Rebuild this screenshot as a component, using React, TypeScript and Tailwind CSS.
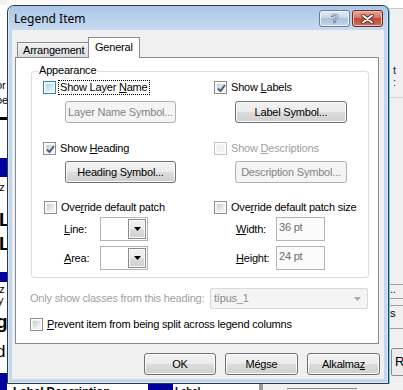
import type { ReactNode } from "react";

const ui = "font-['Liberation_Sans',Arial,sans-serif] text-[11px] leading-[13px] tracking-[-0.2px]";

const btnFace =
	"bg-[linear-gradient(#f2f2f2,#ebebeb_50%,#dddddd_50%,#cfcfcf)] shadow-[inset_0_0_0_1px_#fbfbfb]";

type BoxState = "normal" | "hot" | "disabled";

function CheckBox({ checked, state = "normal" }: { checked?: boolean; state?: BoxState }) {
	const outer =
		state === "hot"
			? "border-[#3c7fb1]"
			: state === "disabled"
				? "border-[#c2c2c2]"
				: "border-[#8e8f8f]";
	const inner =
		state === "hot"
			? "border-[#def1fc] bg-[linear-gradient(135deg,#a9d8f5,#e8f6fe)]"
			: state === "disabled"
				? "border-[#f7f7f7] bg-[#f1f1f1]"
				: "border-[#f2f2f2] bg-[linear-gradient(135deg,#cdcdcd,#f7f7f7)]";
	return (
		<span className={`relative flex h-[13px] w-[13px] shrink-0 border bg-white p-px ${outer}`}>
			<span className={`flex-1 border ${inner}`} />
			{checked && (
				<svg className="absolute left-[1px] top-[1px]" width="11" height="11" viewBox="0 0 11 11">
					<path d="M2 5.5 L4.5 8 L9 2" fill="none" stroke="#3f5b8e" strokeWidth="2" />
				</svg>
			)}
		</span>
	);
}

function CheckRow({
	children,
	checked,
	state,
	focus,
	className = "",
}: {
	children: ReactNode;
	checked?: boolean;
	state?: BoxState;
	focus?: boolean;
	className?: string;
}) {
	return (
		<div className={`flex h-[15px] items-center ${className}`}>
			<CheckBox checked={checked} state={state} />
			<span
				className={`ml-[2px] border px-[1px] leading-[13px] ${
					focus ? "border-dotted border-black" : "border-transparent"
				} ${state === "disabled" ? "text-[#a0a0a0]" : "text-black"}`}
			>
				{children}
			</span>
		</div>
	);
}

function Btn({
	children,
	disabled,
	className = "",
}: {
	children: ReactNode;
	disabled?: boolean;
	className?: string;
}) {
	return (
		<div
			className={`flex h-[22px] items-center justify-center rounded-[3px] border ${
				disabled ? "border-[#adb2b5] bg-[#f4f4f4] text-[#838383]" : `border-[#707070] text-black ${btnFace}`
			} ${className}`}
		>
			{children}
		</div>
	);
}

function Combo() {
	return (
		<div className="flex h-[24px] w-[48px] border border-[#b5b5b5] bg-white p-px">
			<div className="flex-1" />
			<div className={`flex w-[18px] items-center justify-center border border-[#8a8a8a] ${btnFace}`}>
				<svg width="7" height="4" viewBox="0 0 7 4">
					<path d="M0 0H7L3.5 4Z" fill="#000" />
				</svg>
			</div>
		</div>
	);
}

function PtBox({ value }: { value: string }) {
	return (
		<div className="h-[24px] w-[49px] border border-[#b4b4b4] bg-[#fbfbfb] pl-[2px] pt-[3px] text-[#6d6d6d]">
			{value}
		</div>
	);
}

function Ul({ children }: { children: ReactNode }) {
	return <u className="underline-offset-[1px]">{children}</u>;
}

function Backdrop() {
	return (
		<>
			{/* strip above the window */}
			<div className="absolute left-0 top-0 h-[6px] w-[403px] bg-[#fbfbfb]" />
			{/* left edge of the app behind */}
			<div className="absolute left-0 top-0 h-[390px] w-[7px] overflow-hidden bg-white font-['Liberation_Sans',Arial,sans-serif] text-black">
				<div className="absolute left-0 top-0 h-[5px] w-[7px] bg-[#f0f0f0]" />
				<div className="absolute left-[-4px] top-[80px] text-[11px] leading-[11px]">or</div>
				<div className="absolute left-[-4px] top-[95px] text-[11px] leading-[11px]">oe</div>
				<div className="absolute left-0 top-[117px] h-[3px] w-[7px] bg-black" />
				<div className="absolute left-0 top-[158px] h-[19px] w-[7px] bg-[#00009c]" />
				<div className="absolute left-[-3px] top-[182px] text-[11px] leading-[11px]">iz</div>
				<div className="absolute left-[-1px] top-[210px] text-[19px] font-bold leading-[20px]">L</div>
				<div className="absolute left-[-1px] top-[234px] text-[19px] font-bold leading-[20px]">L</div>
				<div className="absolute left-0 top-[272px] h-[10px] w-[7px] bg-[#00009c]" />
				<div className="absolute left-[-3px] top-[284px] text-[11px] leading-[10px]">iz</div>
				<div className="absolute left-[-2px] top-[295px] text-[11px] leading-[10px]">y</div>
				<div className="absolute left-[-4px] top-[312px] text-[19px] font-bold leading-[20px]">g</div>
				<div className="absolute left-[-4px] top-[342px] text-[17px] leading-[20px]">d</div>
				<div className="absolute left-0 top-[373px] h-[17px] w-[7px] bg-[#00009c]" />
			</div>
			{/* right edge of the app behind */}
			<div className="absolute left-[389px] top-0 h-[390px] w-[14px] overflow-hidden bg-[#f0f0f0] font-['Liberation_Sans',Arial,sans-serif] text-[11px]">
				<div className="absolute left-0 top-0 h-[8px] w-[14px] bg-white" />
				<div className="absolute left-0 top-[8px] h-px w-[14px] bg-[#c8c8c8]" />
				<div className="absolute left-[4px] top-[64px] text-[#1a2a6a]">t</div>
				<div className="absolute left-[4px] top-[76px] text-[#1a2a6a]">:</div>
				<div className="absolute left-0 top-[97px] h-px w-[14px] bg-[#d0d0d0]" />
				<div className="absolute left-0 top-[284px] h-px w-[14px] bg-[#a0a0a0]" />
				<div className="absolute left-[1px] top-[283px] text-black">..</div>
				<div className="absolute left-0 top-[298px] h-px w-[14px] bg-[#a0a0a0]" />
				<div className="absolute left-0 top-[305px] h-px w-[14px] bg-[#a0a0a0]" />
				<div className="absolute left-[1px] top-[307px] text-black">s</div>
				<div className="absolute left-0 top-[328px] h-px w-[14px] bg-[#a0a0a0]" />
				<div className="absolute left-[2px] top-[348px] h-[28px] w-[20px] rounded-[2px] border border-[#8a8a8a] bg-[#ececec] pl-[3px] pt-[6px] text-[13px] text-black">
					R
				</div>
				<div className="absolute left-0 top-[383px] h-[7px] w-[14px] bg-[#f7f7f7]" />
			</div>
			{/* bottom edge */}
			<div className="absolute left-[7px] top-[384px] flex h-[6px] w-[396px] overflow-hidden bg-[#f0f0f0] font-['Liberation_Sans',Arial,sans-serif] text-[12px] leading-[14px] text-black">
				<div className="w-[141px] bg-white pl-[6px] pt-[1px] font-bold">Label Description</div>
				<div className="w-[25px] bg-[#00009c]" />
				<div className="w-[86px] bg-white pl-[2px] pt-[1px] text-[10px] font-bold">Label</div>
				<div className="w-[4px] bg-[#9a9a9a]" />
				<div className="ml-[24px] mt-[4px] h-[3px] w-[70px] border-t border-[#8a8a8a]" />
			</div>
		</>
	);
}

export default function App() {
	return (
		<div className={`relative h-[390px] w-[403px] overflow-hidden bg-[#f0f0f0] ${ui}`}>
			<Backdrop />

			<div className="absolute left-[7px] top-[5px] flex h-[379px] w-[382px] flex-col rounded-t-[7px] border border-[#2d3a48] bg-[#c3d8ef] px-[4px] pb-[4px] shadow-[inset_0_0_0_1px_#dbe8f6,1px_0_0_#5fd0f0]">
				{/* title bar */}
				<div className="flex h-[24px] shrink-0 items-start -mx-[3px] rounded-t-[6px] bg-[linear-gradient(#aac6e7,#c6dbf1)] px-[3px]">
					<span className="ml-[2px] mt-[5px] font-['Noto_Sans',sans-serif] text-[12px] leading-[16px] tracking-normal text-black">
						Legend Item
					</span>
					<div className="ml-auto mr-[1px] mt-[4px] flex gap-[2px]">
						<div className="flex h-[17px] w-[31px] items-center justify-center rounded-[3px] border border-[#6b7e96] bg-[linear-gradient(#e3ecf6,#c3d4e8_50%,#adc2dc_50%,#c2d5ea)] shadow-[inset_0_0_0_1px_#eef4fa]">
							<span className="font-['Liberation_Sans',sans-serif] text-[13px] font-bold leading-[13px] text-white [-webkit-text-stroke:0.6px_#4a5a70]">
								?
							</span>
						</div>
						<div className="flex h-[17px] w-[31px] items-center justify-center rounded-[3px] border border-[#6e2d25] bg-[linear-gradient(#e9a99b,#d27160_50%,#c04a36_50%,#d0705a)] shadow-[inset_0_0_0_1px_#f0b8ac]">
							<svg width="13" height="10" viewBox="0 0 13 10">
								<path d="M2 1.5 L11 8.5 M11 1.5 L2 8.5" stroke="#4a2620" strokeWidth="3.6" strokeLinecap="round" />
								<path d="M2 1.5 L11 8.5 M11 1.5 L2 8.5" stroke="#ffffff" strokeWidth="2" strokeLinecap="round" />
							</svg>
						</div>
					</div>
				</div>

				{/* client area */}
				<div className="flex flex-1 flex-col bg-[#f0f0f0] pl-[3px] pr-[5px]">
					{/* tabs */}
					<div className="flex h-[27px] items-end pl-[2px]">
						<div className="h-[15px] w-[72px] border border-b-0 border-[#898c95] bg-[linear-gradient(#f3f3f3,#e7e7e7_50%,#dcdcdc)] pl-[5px] pt-px">
							Arrangement
						</div>
						<div className="relative z-10 -mb-px -ml-px h-[21px] w-[52px] border border-b-0 border-[#898c95] bg-white pl-[6px] pt-[3px]">
							General
						</div>
					</div>

					{/* tab page */}
					<div className="flex h-[287px] flex-col border border-[#898c95] bg-white">
						<div className="relative ml-[15px] mt-[13px] h-[207px] w-[338px] rounded-[3px] border border-[#d5dfe5]">
							<span className="absolute left-[6px] top-[-8px] bg-white px-px">Appearance</span>
							<div className="grid grid-cols-[171px_1fr] pl-[11px]">
								<div className="flex flex-col">
									<CheckRow state="hot" focus className="mt-[8px]">
										Show Layer <Ul>N</Ul>ame
									</CheckRow>
									<Btn disabled className="ml-[22px] mt-[6px] w-[111px]">
										Layer Name Symbol...
									</Btn>
									<CheckRow checked className="mt-[18px]">
										Show <Ul>H</Ul>eading
									</CheckRow>
									<Btn className="ml-[22px] mt-[5px] w-[111px]">Heading Symbol...</Btn>
									<CheckRow className="ml-[1px] mt-[17px]">
										Ove<Ul>r</Ul>ride default patch
									</CheckRow>
									<div className="ml-[21px] mt-[2px] flex items-center">
										<span className="w-[36px]">
											<Ul>L</Ul>ine:
										</span>
										<Combo />
									</div>
									<div className="ml-[21px] mt-[5px] flex items-center">
										<span className="w-[36px]">
											<Ul>A</Ul>rea:
										</span>
										<Combo />
									</div>
								</div>
								<div className="flex flex-col">
									<CheckRow checked className="mt-[8px]">
										Show <Ul>L</Ul>abels
									</CheckRow>
									<Btn className="ml-[21px] mt-[6px] w-[112px]">Label Symbol...</Btn>
									<CheckRow state="disabled" className="mt-[18px]">
										Show <Ul>D</Ul>escriptions
									</CheckRow>
									<Btn disabled className="ml-[21px] mt-[5px] w-[112px]">
										Description Symbol...
									</Btn>
									<CheckRow className="mt-[17px]">
										Ove<Ul>r</Ul>ride default patch size
									</CheckRow>
									<div className="ml-[22px] mt-[2px] flex items-center">
										<span className="w-[40px]">
											<Ul>W</Ul>idth:
										</span>
										<PtBox value="36 pt" />
									</div>
									<div className="ml-[22px] mt-[5px] flex items-center">
										<span className="w-[40px]">
											<Ul>H</Ul>eight:
										</span>
										<PtBox value="24 pt" />
									</div>
								</div>
							</div>
						</div>

						<div className="ml-[14px] mt-[10px] flex h-[21px] items-center">
							<span className="w-[180px] text-[#a0a0a0]">Only show classes from this heading:</span>
							<div className="flex h-[21px] w-[158px] items-center rounded-[2px] border border-[#d9d9d9] bg-[#f4f4f4] pl-[3px] pr-[6px] text-[#8c8c8c]">
								<span className="flex-1">típus_1</span>
								<svg width="7" height="4" viewBox="0 0 7 4">
									<path d="M0 0H7L3.5 4Z" fill="#a8a8a8" />
								</svg>
							</div>
						</div>

						<CheckRow className="ml-[14px] mt-[8px]">
							<Ul>P</Ul>revent item from being split across legend columns
						</CheckRow>
					</div>

					{/* dialog buttons */}
					<div className="-mr-px mt-[9px] flex justify-end gap-[9px]">
						<Btn className="w-[72px] border-[#3c7fb1] shadow-[inset_0_0_0_1px_#48d0f2]">OK</Btn>
						<Btn className="w-[73px]">Mégse</Btn>
						<Btn className="w-[73px]">
							Alkalma<Ul>z</Ul>
						</Btn>
					</div>
				</div>
			</div>
		</div>
	);
}
